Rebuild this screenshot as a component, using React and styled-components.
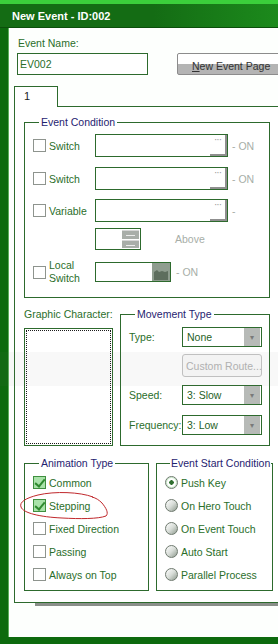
import React from 'react';
import styled, { createGlobalStyle, css } from 'styled-components';

const GlobalStyle = createGlobalStyle`
  html, body { margin: 0; padding: 0; background: #ffffff; }
  body { font-family: "Liberation Sans", Arial, sans-serif; font-size: 10.5px; }
  * { box-sizing: border-box; }
`;

const GREEN = '#2d6a2d';
const TEXT = '#2a6e2a';
const NAVY = '#1f2370';
const MUTED = '#a7aea7';

export default function App() {
    return (
        <Window>
            <GlobalStyle />
            <TitleBar>New Event - ID:002</TitleBar>
            <Body>
                <NameLabel>Event Name:</NameLabel>
                <NameRow>
                    <TextBox>EV002</TextBox>
                    <PageButton>
                        <u>N</u>ew Event Page
                    </PageButton>
                </NameRow>
                <Tab>1</Tab>
                <Panel>
                    <Group $width={246} $pt={5} $pb={15}>
                        <Legend>Event Condition</Legend>
                        <CondRow $mt={0} $h={23}>
                            <CheckLabel>
                                <Check />
                                <span>Switch</span>
                            </CheckLabel>
                            <PickBox>
                                <Dots>···</Dots>
                            </PickBox>
                            <Suffix>- ON</Suffix>
                        </CondRow>
                        <CondRow $mt={10} $h={23}>
                            <CheckLabel>
                                <Check />
                                <span>Switch</span>
                            </CheckLabel>
                            <PickBox>
                                <Dots>···</Dots>
                            </PickBox>
                            <Suffix>- ON</Suffix>
                        </CondRow>
                        <CondRow $mt={9} $h={23}>
                            <CheckLabel>
                                <Check />
                                <span>Variable</span>
                            </CheckLabel>
                            <PickBox>
                                <Dots>···</Dots>
                            </PickBox>
                            <Suffix>-</Suffix>
                        </CondRow>
                        <CondRow $mt={6} $h={22}>
                            <CheckLabel />
                            <SpinBox>
                                <SpinButtons>
                                    <SpinHalf />
                                    <SpinHalf />
                                </SpinButtons>
                            </SpinBox>
                            <Suffix $ml={34}>Above</Suffix>
                        </CondRow>
                        <CondRow $mt={12} $h={20}>
                            <CheckLabel>
                                <Check />
                                <TwoLine>
                                    Local
                                    <br />
                                    Switch
                                </TwoLine>
                            </CheckLabel>
                            <LocalBox>
                                <LocalButton>
                                    <svg width="16" height="18" viewBox="0 0 16 18">
                                        <path d="M1 17 V9 L4 7 L6 9 L9 8 L12 9 L15 8 V17 Z" fill="#5e6e5e" />
                                    </svg>
                                </LocalButton>
                            </LocalBox>
                            <Suffix $ml={5}>- ON</Suffix>
                        </CondRow>
                    </Group>

                    <MiddleRow>
                        <GraphicCol>
                            <PlainLabel>Graphic Character:</PlainLabel>
                            <GraphicBox>
                                <GraphicInner />
                            </GraphicBox>
                        </GraphicCol>
                        <Group $width={150} $ml={7} $pt={3} $pb={8}>
                            <Legend>Movement Type</Legend>
                            <MoveRow $mt={3}>
                                <FieldLabel>Type:</FieldLabel>
                                <Select>
                                    <span>None</span>
                                    <DropButton>▾</DropButton>
                                </Select>
                            </MoveRow>
                            <MoveRow $mt={7}>
                                <FieldLabel />
                                <RouteButton>Custom Route...</RouteButton>
                            </MoveRow>
                            <MoveRow $mt={8}>
                                <FieldLabel>Speed:</FieldLabel>
                                <Select>
                                    <span>3: Slow</span>
                                    <DropButton>▾</DropButton>
                                </Select>
                            </MoveRow>
                            <MoveRow $mt={10}>
                                <FieldLabel>Frequency:</FieldLabel>
                                <Select>
                                    <span>3: Low</span>
                                    <DropButton>▾</DropButton>
                                </Select>
                            </MoveRow>
                        </Group>
                    </MiddleRow>

                    <BottomRow>
                        <Group $width={125} $pt={4} $pb={7}>
                            <Legend>Animation Type</Legend>
                            <OptionList>
                                <Option>
                                    <Check $checked />
                                    <span>Common</span>
                                </Option>
                                <Option>
                                    <Check $checked />
                                    <span>Stepping</span>
                                </Option>
                                <Option>
                                    <Check />
                                    <span>Fixed Direction</span>
                                </Option>
                                <Option>
                                    <Check />
                                    <span>Passing</span>
                                </Option>
                                <Option>
                                    <Check />
                                    <span>Always on Top</span>
                                </Option>
                            </OptionList>
                        </Group>
                        <Group $width={117} $ml={7} $pt={4} $pb={7}>
                            <Legend $tight>Event Start Condition</Legend>
                            <OptionList>
                                <Option>
                                    <Radio $selected />
                                    <span>Push Key</span>
                                </Option>
                                <Option>
                                    <Radio />
                                    <span>On Hero Touch</span>
                                </Option>
                                <Option>
                                    <Radio />
                                    <span>On Event Touch</span>
                                </Option>
                                <Option>
                                    <Radio />
                                    <span>Auto Start</span>
                                </Option>
                                <Option>
                                    <Radio />
                                    <span>Parallel Process</span>
                                </Option>
                            </OptionList>
                        </Group>
                    </BottomRow>
                </Panel>
            </Body>
            <Watermark />
            <Scribble width="278" height="644" viewBox="0 0 278 644">
                <path
                    d="M93 497 C80 492 55 491 38 495 C26 498 19 502 21 507 C23 513 40 517 62 518 C80 519 98 519 106 516 C109 513 106 508 102 503 C99 500 96 498 92 497"
                    fill="none"
                    stroke="#c0282c"
                    strokeWidth="1"
                />
            </Scribble>
        </Window>
    );
}

const Window = styled.div`
    position: relative;
    width: 278px;
    height: 644px;
    overflow: hidden;
    display: flex;
    flex-direction: column;
    background: #0d6a0e;
    padding-bottom: 7px;
`;

const TitleBar = styled.div`
    height: 28px;
    flex-shrink: 0;
    border-top: 4px solid #3bcf3b;
    background: linear-gradient(to right, #146c14 0%, #146c14 55%, #1c8a1c 100%);
    color: #ffffff;
    font-weight: bold;
    font-size: 11px;
    padding-left: 12px;
    display: flex;
    align-items: center;
    border-bottom: 1px solid #0b4f0b;
`;

const Body = styled.div`
    flex: 1;
    min-height: 0;
    margin-left: 8px;
    padding-bottom: 34px;
    background: #fdfffd;
    border-left: 1px solid #5cae5c;
    display: flex;
    flex-direction: column;
    align-items: flex-start;
    color: ${TEXT};
`;

const NameLabel = styled.div`
    margin: 8px 0 0 9px;
    line-height: 14px;
    color: ${TEXT};
`;

const NameRow = styled.div`
    display: flex;
    margin-top: 3px;
    padding-left: 8px;
`;

const TextBox = styled.div`
    width: 131px;
    height: 22px;
    flex-shrink: 0;
    border: 1px solid ${GREEN};
    background: #fff;
    padding: 4px 0 0 2px;
    color: ${TEXT};
`;

const PageButton = styled.div`
    margin-left: 29px;
    width: 140px;
    height: 22px;
    flex-shrink: 0;
    border: 1px solid #8c8c8c;
    border-radius: 2px;
    background: linear-gradient(#ffffff 0%, #ffffff 48%, #b4b4b4 48%, #b4b4b4 100%);
    color: #333;
    padding: 6px 0 0 14px;
    white-space: nowrap;
`;

const Tab = styled.div`
    margin: 11px 0 0 5px;
    width: 44px;
    height: 21px;
    flex-shrink: 0;
    border: 1px solid ${GREEN};
    border-bottom: none;
    background: #fff;
    color: #222;
    font-size: 11px;
    padding: 3px 0 0 9px;
    position: relative;
    z-index: 1;
    margin-bottom: -1px;
`;

const Panel = styled.div`
    flex: 1;
    min-height: 0;
    margin-left: 5px;
    width: 300px;
    border: 1px solid ${GREEN};
    background: #fff;
    padding: 8px 0 0 9px;
    box-shadow: 21px 3px 0 #8a8f8a;
    display: flex;
    flex-direction: column;
`;

const Group = styled.fieldset`
    margin: 0;
    margin-left: ${(p) => p.$ml || 0}px;
    width: ${(p) => p.$width}px;
    border: 1px solid ${GREEN};
    padding: ${(p) => p.$pt}px 0 ${(p) => p.$pb}px 8px;
    min-width: 0;
    flex-shrink: 0;
`;

const Legend = styled.legend`
    margin-left: ${(p) => (p.$tight ? 5 : 6)}px;
    padding: 0 ${(p) => (p.$tight ? 1 : 2)}px;
    line-height: 14px;
    color: ${NAVY};
    white-space: nowrap;
`;

const CondRow = styled.div`
    display: flex;
    align-items: center;
    height: ${(p) => p.$h}px;
    margin-top: ${(p) => p.$mt}px;
`;

const CheckLabel = styled.div`
    width: 62px;
    flex-shrink: 0;
    display: flex;
    align-items: center;
    gap: 3px;
    color: ${TEXT};
`;

const TwoLine = styled.span`
    line-height: 13px;
`;

const checkedStyle = css`
    background: #a9e2a9;
    border-color: #3f8f3f;
    &::after {
        content: '';
        position: absolute;
        left: 3px;
        top: 0px;
        width: 4px;
        height: 8px;
        border: solid #2f8a2f;
        border-width: 0 2px 2px 0;
        transform: rotate(40deg);
    }
`;

const Check = styled.span`
    position: relative;
    display: inline-block;
    width: 13px;
    height: 13px;
    flex-shrink: 0;
    border: 1px solid #8e948e;
    background: #fff;
    ${(p) => p.$checked && checkedStyle}
`;

const Radio = styled.span`
    position: relative;
    display: inline-block;
    width: 13px;
    height: 13px;
    flex-shrink: 0;
    border-radius: 50%;
    border: 1px solid #6f7a6f;
    background: ${(p) =>
        p.$selected
            ? 'radial-gradient(circle, #2f6f2f 0 2px, #ffffff 2.5px)'
            : 'linear-gradient(135deg, #ffffff 0%, #d8ddd8 50%, #8e9a8e 100%)'};
    box-shadow: ${(p) => (p.$selected ? 'inset 0 0 0 1px #c8e8c8' : 'none')};
`;

const PickBox = styled.div`
    width: 133px;
    height: 23px;
    flex-shrink: 0;
    border: 1px solid ${GREEN};
    background: #fff;
    display: flex;
    justify-content: flex-end;
`;

const Dots = styled.div`
    width: 17px;
    height: 21px;
    border-right: 2px solid #8f8f8f;
    border-bottom: 2px solid #8f8f8f;
    color: #9a9a9a;
    font-size: 10px;
    line-height: 10px;
    text-align: center;
    letter-spacing: -1px;
`;

const Suffix = styled.span`
    margin-left: ${(p) => p.$ml ?? 4}px;
    color: ${MUTED};
    white-space: nowrap;
`;

const SpinBox = styled.div`
    width: 46px;
    height: 22px;
    flex-shrink: 0;
    border: 1px solid ${GREEN};
    background: #fff;
    display: flex;
    justify-content: flex-end;
    padding: 1px;
`;

const SpinButtons = styled.div`
    width: 17px;
    display: flex;
    flex-direction: column;
    gap: 1px;
`;

const SpinHalf = styled.div`
    flex: 1;
    background: #a9aea9;
    border-top: 1px solid #d6d6d6;
    position: relative;
    &::after {
        content: '';
        position: absolute;
        left: 4px;
        right: 4px;
        top: 4px;
        height: 1px;
        background: #ececec;
    }
`;

const LocalBox = styled.div`
    width: 76px;
    height: 20px;
    flex-shrink: 0;
    border: 1px solid ${GREEN};
    background: #fff;
    display: flex;
    justify-content: flex-end;
`;

const LocalButton = styled.div`
    width: 18px;
    background: #8f9d8f;
    display: flex;
    align-items: flex-end;
    justify-content: center;
`;

const MiddleRow = styled.div`
    display: flex;
    flex-shrink: 0;
    margin-top: 9px;
`;

const GraphicCol = styled.div`
    width: 89px;
    display: flex;
    flex-direction: column;
`;

const PlainLabel = styled.div`
    line-height: 14px;
    color: ${TEXT};
    white-space: nowrap;
`;

const GraphicBox = styled.div`
    margin-top: 7px;
    height: 118px;
    border: 1px solid ${GREEN};
    padding: 1px;
`;

const GraphicInner = styled.div`
    height: 100%;
    border: 1px dotted #1a1a1a;
`;

const MoveRow = styled.div`
    display: flex;
    align-items: center;
    margin-top: ${(p) => p.$mt}px;
`;

const FieldLabel = styled.span`
    width: 53px;
    flex-shrink: 0;
    color: ${TEXT};
    white-space: nowrap;
`;

const Select = styled.div`
    width: 80px;
    height: 20px;
    border: 1px solid ${GREEN};
    background: #fff;
    display: flex;
    align-items: center;
    justify-content: space-between;
    padding-left: 4px;
    color: #1f5f1f;
`;

const DropButton = styled.span`
    width: 16px;
    height: 18px;
    margin-right: 1px;
    background: #b7bab7;
    color: #7a7a7a;
    font-size: 8px;
    display: flex;
    align-items: center;
    justify-content: center;
`;

const RouteButton = styled.div`
    width: 80px;
    height: 23px;
    border: 1px solid #c4c4c4;
    border-radius: 3px;
    background: #fafafa;
    color: #b4b4b4;
    padding: 5px 0 0 3px;
    white-space: nowrap;
`;

const BottomRow = styled.div`
    display: flex;
    flex-shrink: 0;
    margin-top: 10px;
`;

const OptionList = styled.div`
    display: flex;
    flex-direction: column;
    gap: 6px;
`;

const Option = styled.div`
    height: 17px;
    display: flex;
    align-items: center;
    gap: 3px;
    color: ${TEXT};
    white-space: nowrap;
`;

const Watermark = styled.div`
    position: absolute;
    left: 0;
    right: 0;
    top: 352px;
    height: 34px;
    background: rgba(120, 120, 120, 0.05);
    pointer-events: none;
`;

const Scribble = styled.svg`
    position: absolute;
    left: 0;
    top: 0;
    pointer-events: none;
`;
